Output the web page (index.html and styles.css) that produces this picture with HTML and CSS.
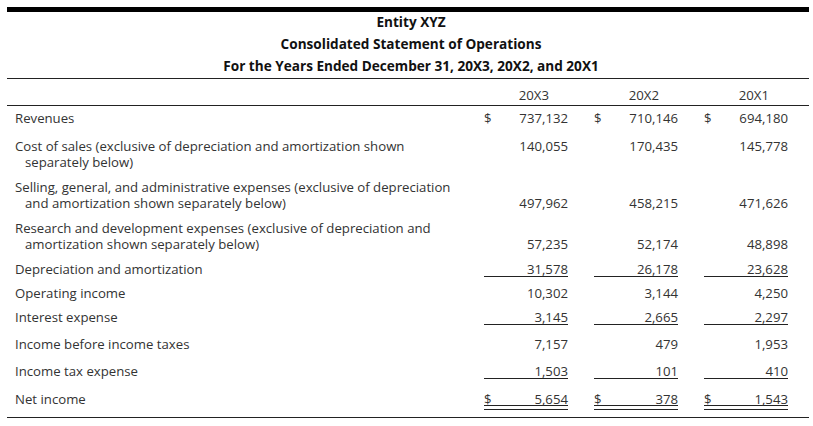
FILE: index.html
```html
<!DOCTYPE html>
<html>
<head>
<meta charset="utf-8">
<link rel="stylesheet" href="styles.css">
</head>
<body>
<div class="statement">
  <div class="title">
    <div class="title-line">Entity XYZ</div>
    <div class="title-line">Consolidated Statement of Operations</div>
    <div class="title-line">For the Years Ended December 31, 20X3, 20X2, and 20X1</div>
  </div>
  <div class="row head">
    <div class="label"></div>
    <div class="year">20X3</div>
    <div class="year">20X2</div>
    <div class="year">20X1</div>
  </div>
  <div class="row r-rev">
    <div class="label">Revenues</div>
    <div class="val"><span class="cur">$</span><span>737,132</span></div>
    <div class="val"><span class="cur">$</span><span>710,146</span></div>
    <div class="val"><span class="cur">$</span><span>694,180</span></div>
  </div>
  <div class="row r-cost top">
    <div class="label">Cost of sales (exclusive of depreciation and amortization shown<br>separately below)</div>
    <div class="val"><span>140,055</span></div>
    <div class="val"><span>170,435</span></div>
    <div class="val"><span>145,778</span></div>
  </div>
  <div class="row r-sga">
    <div class="label">Selling, general, and administrative expenses (exclusive of depreciation<br>and amortization shown separately below)</div>
    <div class="val"><span>497,962</span></div>
    <div class="val"><span>458,215</span></div>
    <div class="val"><span>471,626</span></div>
  </div>
  <div class="row r-rd">
    <div class="label">Research and development expenses (exclusive of depreciation and<br>amortization shown separately below)</div>
    <div class="val"><span>57,235</span></div>
    <div class="val"><span>52,174</span></div>
    <div class="val"><span>48,898</span></div>
  </div>
  <div class="row r-dep">
    <div class="label">Depreciation and amortization</div>
    <div class="val under"><span>31,578</span></div>
    <div class="val under"><span>26,178</span></div>
    <div class="val under"><span>23,628</span></div>
  </div>
  <div class="row r-op">
    <div class="label">Operating income</div>
    <div class="val"><span>10,302</span></div>
    <div class="val"><span>3,144</span></div>
    <div class="val"><span>4,250</span></div>
  </div>
  <div class="row r-int">
    <div class="label">Interest expense</div>
    <div class="val under"><span>3,145</span></div>
    <div class="val under"><span>2,665</span></div>
    <div class="val under"><span>2,297</span></div>
  </div>
  <div class="row r-ibt">
    <div class="label">Income before income taxes</div>
    <div class="val"><span>7,157</span></div>
    <div class="val"><span>479</span></div>
    <div class="val"><span>1,953</span></div>
  </div>
  <div class="row r-tax">
    <div class="label">Income tax expense</div>
    <div class="val under"><span>1,503</span></div>
    <div class="val under"><span>101</span></div>
    <div class="val under"><span>410</span></div>
  </div>
  <div class="row r-net">
    <div class="label">Net income</div>
    <div class="val double"><span class="cur">$</span><span>5,654</span></div>
    <div class="val double"><span class="cur">$</span><span>378</span></div>
    <div class="val double"><span class="cur">$</span><span>1,543</span></div>
  </div>
</div>
</body>
</html>
```
FILE: styles.css
```css
html, body {
  margin: 0;
  padding: 0;
  background: #fff;
}

.statement {
  width: 802px;
  margin: 7px 0 0 7px;
  border-top: 5px solid #000;
  border-bottom: 1px solid #222;
  font-family: "Open Sans", "Liberation Sans", sans-serif;
  font-size: 13.2px;
  color: #333;
}

.title {
  margin-top: -1px;
  padding: 0 0 1px 6px;
  border-bottom: 1px solid #222;
  text-align: center;
  font-weight: 700;
  font-size: 13.6px;
  color: #111;
}

.title-line {
  line-height: 22px;
}

.row {
  display: grid;
  grid-template-columns: 1fr 84px 84px 84px;
  column-gap: 26px;
  padding-right: 21px;
  line-height: 16px;
  align-items: end;
}

.row.top {
  align-items: start;
}

.head {
  padding-top: 8px;
  padding-bottom: 2px;
  border-bottom: 1px solid #222;
}

.year {
  text-align: right;
  padding-right: 19px;
}

.label {
  padding-left: 18px;
  text-indent: -10px;
}

.val {
  display: flex;
  justify-content: flex-end;
}

.val .cur {
  margin-right: auto;
}

.under {
  background: linear-gradient(#222, #222) 0 100% / 100% 1px no-repeat;
}

.double {
  background: linear-gradient(#222, #222) 0 calc(100% - 1px) / 100% 1px no-repeat;
  box-shadow: 0 2px 0 #fff, 0 3px 0 #222;
}

.r-rev { padding-top: 4px; }
.r-cost { padding-top: 12px; }
.r-sga { padding-top: 9px; }
.r-rd { padding-top: 9px; }
.r-dep { padding-top: 9px; }
.r-op { padding-top: 8px; }
.r-int { padding-top: 8px; }
.r-ibt { padding-top: 11px; }
.r-tax { padding-top: 11px; }
.r-net { padding-top: 12px; padding-bottom: 10px; }
```
